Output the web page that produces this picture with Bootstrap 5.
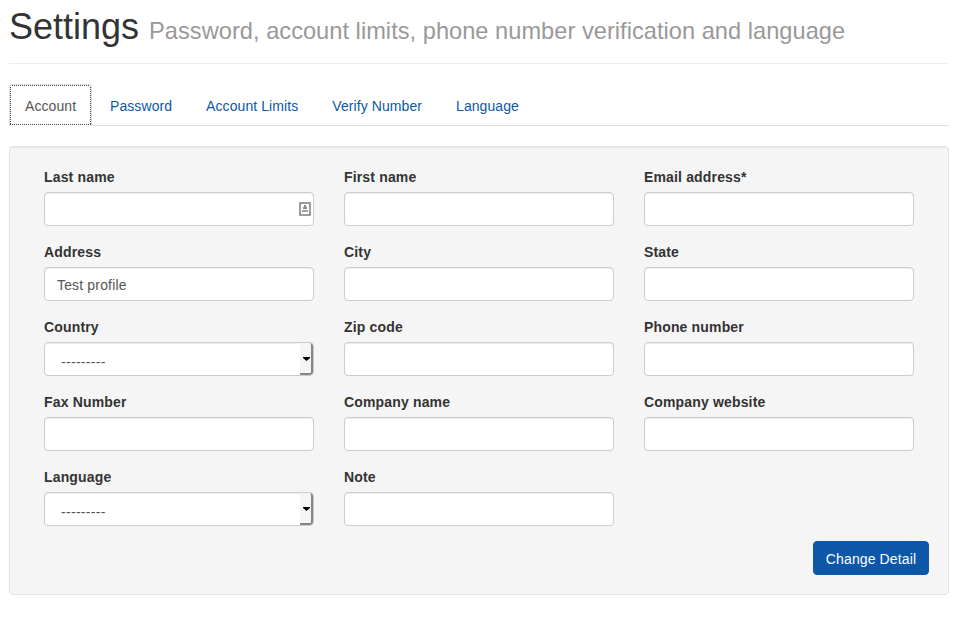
<!DOCTYPE html>
<html lang="en">
<head>
<meta charset="utf-8">
<meta name="viewport" content="width=device-width, initial-scale=1">
<title>Settings</title>
<link href="https://cdn.jsdelivr.net/npm/bootstrap@5.3.0/dist/css/bootstrap.min.css" rel="stylesheet">
<style>
body{font-family:"Liberation Sans",Arial,sans-serif;font-size:14px;line-height:20px;color:#333;background:#fff}
.page-wrap{padding:0 10px 0 9px}
.page-head{height:64px;border-bottom:1px solid #eee;margin-bottom:20px}
.page-head h1{font-weight:400;font-size:36px;line-height:40px;color:#333;padding-top:7px}
.page-head small{font-size:23.6px;color:#999;letter-spacing:.035px}
.settings-tabs{--bs-nav-tabs-border-color:#ddd;--bs-nav-link-padding-x:15px;--bs-nav-link-padding-y:10px;--bs-nav-link-color:#0c57a8;--bs-nav-tabs-border-radius:4px;height:42px}
.settings-tabs .nav-link{font-size:14px;line-height:20px;height:42px;margin-right:2px;padding:11px 15px 9px;letter-spacing:.08px}
/* focus ring of alternating one-pixel dots */
.settings-tabs .nav-link.active{--dots:#444 0 1px,#fff 1px 2px;width:83px;color:#555;border-color:#ddd #ddd #fff;border-radius:3px 3px 0 0;
background:repeating-linear-gradient(90deg,var(--dots)) 0 0/100% 1px no-repeat,repeating-linear-gradient(90deg,var(--dots)) 0 100%/100% 1px no-repeat,repeating-linear-gradient(180deg,var(--dots)) 0 0/1px 100% no-repeat,repeating-linear-gradient(180deg,var(--dots)) 100% 0/1px 100% no-repeat,#fff;background-origin:padding-box;background-clip:padding-box}
.detail-panel{background:#f5f5f5;border:1px solid #e3e3e3;border-radius:4px;margin-top:20px;height:449px;padding:19px;box-shadow:inset 0 1px 1px rgba(0,0,0,.05)}
.field-row{--bs-gutter-x:30px}
.field{margin-bottom:15px}
.field .form-label{display:block;font-weight:700;margin:0 0 5px;height:21px;line-height:22px;letter-spacing:.16px}
.field .form-control{height:34px;font-size:14px;line-height:20px;padding:7px 12px 5px;border:1px solid #ccc;border-radius:4px;color:#555;background:#fff;letter-spacing:.16px;box-shadow:inset 0 1px 1px rgba(0,0,0,.075)}
.field .pick{padding:0 0 0 16px;overflow:hidden;letter-spacing:.3px}
.pick-text{padding-top:6px}
.pick-arrow{width:13px;height:32px;padding:1px 0 0 2px;background:#f5f5f4;border-right:2px solid #858585;border-bottom:2px solid #858585;border-radius:0 3px 3px 0}
.contact-mark{top:10px;right:3px}
.save-btn{--bs-btn-bg:#0c57a8;--bs-btn-border-color:#0c57a8;--bs-btn-font-size:14px;--bs-btn-border-radius:4px;--bs-btn-line-height:20px;height:34px;width:116px;padding:7px 0 5px;letter-spacing:.12px}
</style>
</head>
<body>
<main class="page-wrap">
<header class="page-head"><h1 class="m-0">Settings <small>Password, account limits, phone number verification and language</small></h1></header>
<ul class="nav nav-tabs settings-tabs">
<li class="nav-item"><a class="nav-link active" href="#">Account</a></li>
<li class="nav-item"><a class="nav-link" href="#">Password</a></li>
<li class="nav-item"><a class="nav-link" href="#">Account Limits</a></li>
<li class="nav-item"><a class="nav-link" href="#">Verify Number</a></li>
<li class="nav-item"><a class="nav-link" href="#">Language</a></li>
</ul>
<form class="detail-panel">
<div class="row mx-0 field-row">
<div class="col-4 field"><label class="form-label" for="last">Last name</label>
<div class="position-relative"><input class="form-control" id="last" type="text">
<svg class="position-absolute contact-mark" width="12" height="14" viewBox="0 0 12 14" aria-hidden="true"><rect x="1" y="1" width="10" height="12" fill="#fff" stroke="#858585" stroke-width="1.6"/><path d="M5 3h2v2H5zM4 5h4v2H4z" fill="#8c8c8c"/><path d="M3 8h6v2H3z" fill="#a0a0a0"/></svg></div></div>
<div class="col-4 field"><label class="form-label" for="first">First name</label><input class="form-control" id="first" type="text"></div>
<div class="col-4 field"><label class="form-label" for="email">Email address*</label><input class="form-control" id="email" type="text"></div>
<div class="col-4 field"><label class="form-label" for="address">Address</label><input class="form-control" id="address" type="text" value="Test profile"></div>
<div class="col-4 field"><label class="form-label" for="city">City</label><input class="form-control" id="city" type="text"></div>
<div class="col-4 field"><label class="form-label" for="state">State</label><input class="form-control" id="state" type="text"></div>
<div class="col-4 field"><label class="form-label">Country</label>
<div class="form-control pick d-flex justify-content-between align-items-center" role="combobox" tabindex="0"><span class="pick-text">---------</span><span class="pick-arrow d-flex align-items-center justify-content-center"><svg width="7" height="4" viewBox="0 0 7 4" aria-hidden="true"><path d="M0 0h7v1L3.5 4 0 1z" fill="#000"/></svg></span></div></div>
<div class="col-4 field"><label class="form-label" for="zip">Zip code</label><input class="form-control" id="zip" type="text"></div>
<div class="col-4 field"><label class="form-label" for="phone">Phone number</label><input class="form-control" id="phone" type="text"></div>
<div class="col-4 field"><label class="form-label" for="fax">Fax Number</label><input class="form-control" id="fax" type="text"></div>
<div class="col-4 field"><label class="form-label" for="company">Company name</label><input class="form-control" id="company" type="text"></div>
<div class="col-4 field"><label class="form-label" for="website">Company website</label><input class="form-control" id="website" type="text"></div>
<div class="col-4 field"><label class="form-label">Language</label>
<div class="form-control pick d-flex justify-content-between align-items-center" role="combobox" tabindex="0"><span class="pick-text">---------</span><span class="pick-arrow d-flex align-items-center justify-content-center"><svg width="7" height="4" viewBox="0 0 7 4" aria-hidden="true"><path d="M0 0h7v1L3.5 4 0 1z" fill="#000"/></svg></span></div></div>
<div class="col-4 field"><label class="form-label" for="note">Note</label><input class="form-control" id="note" type="text"></div>
</div>
<div class="d-flex justify-content-end"><button class="btn btn-primary save-btn" type="button">Change Detail</button></div>
</form>
</main>
<script src="https://cdn.jsdelivr.net/npm/bootstrap@5.3.0/dist/js/bootstrap.bundle.min.js"></script>
</body>
</html>
